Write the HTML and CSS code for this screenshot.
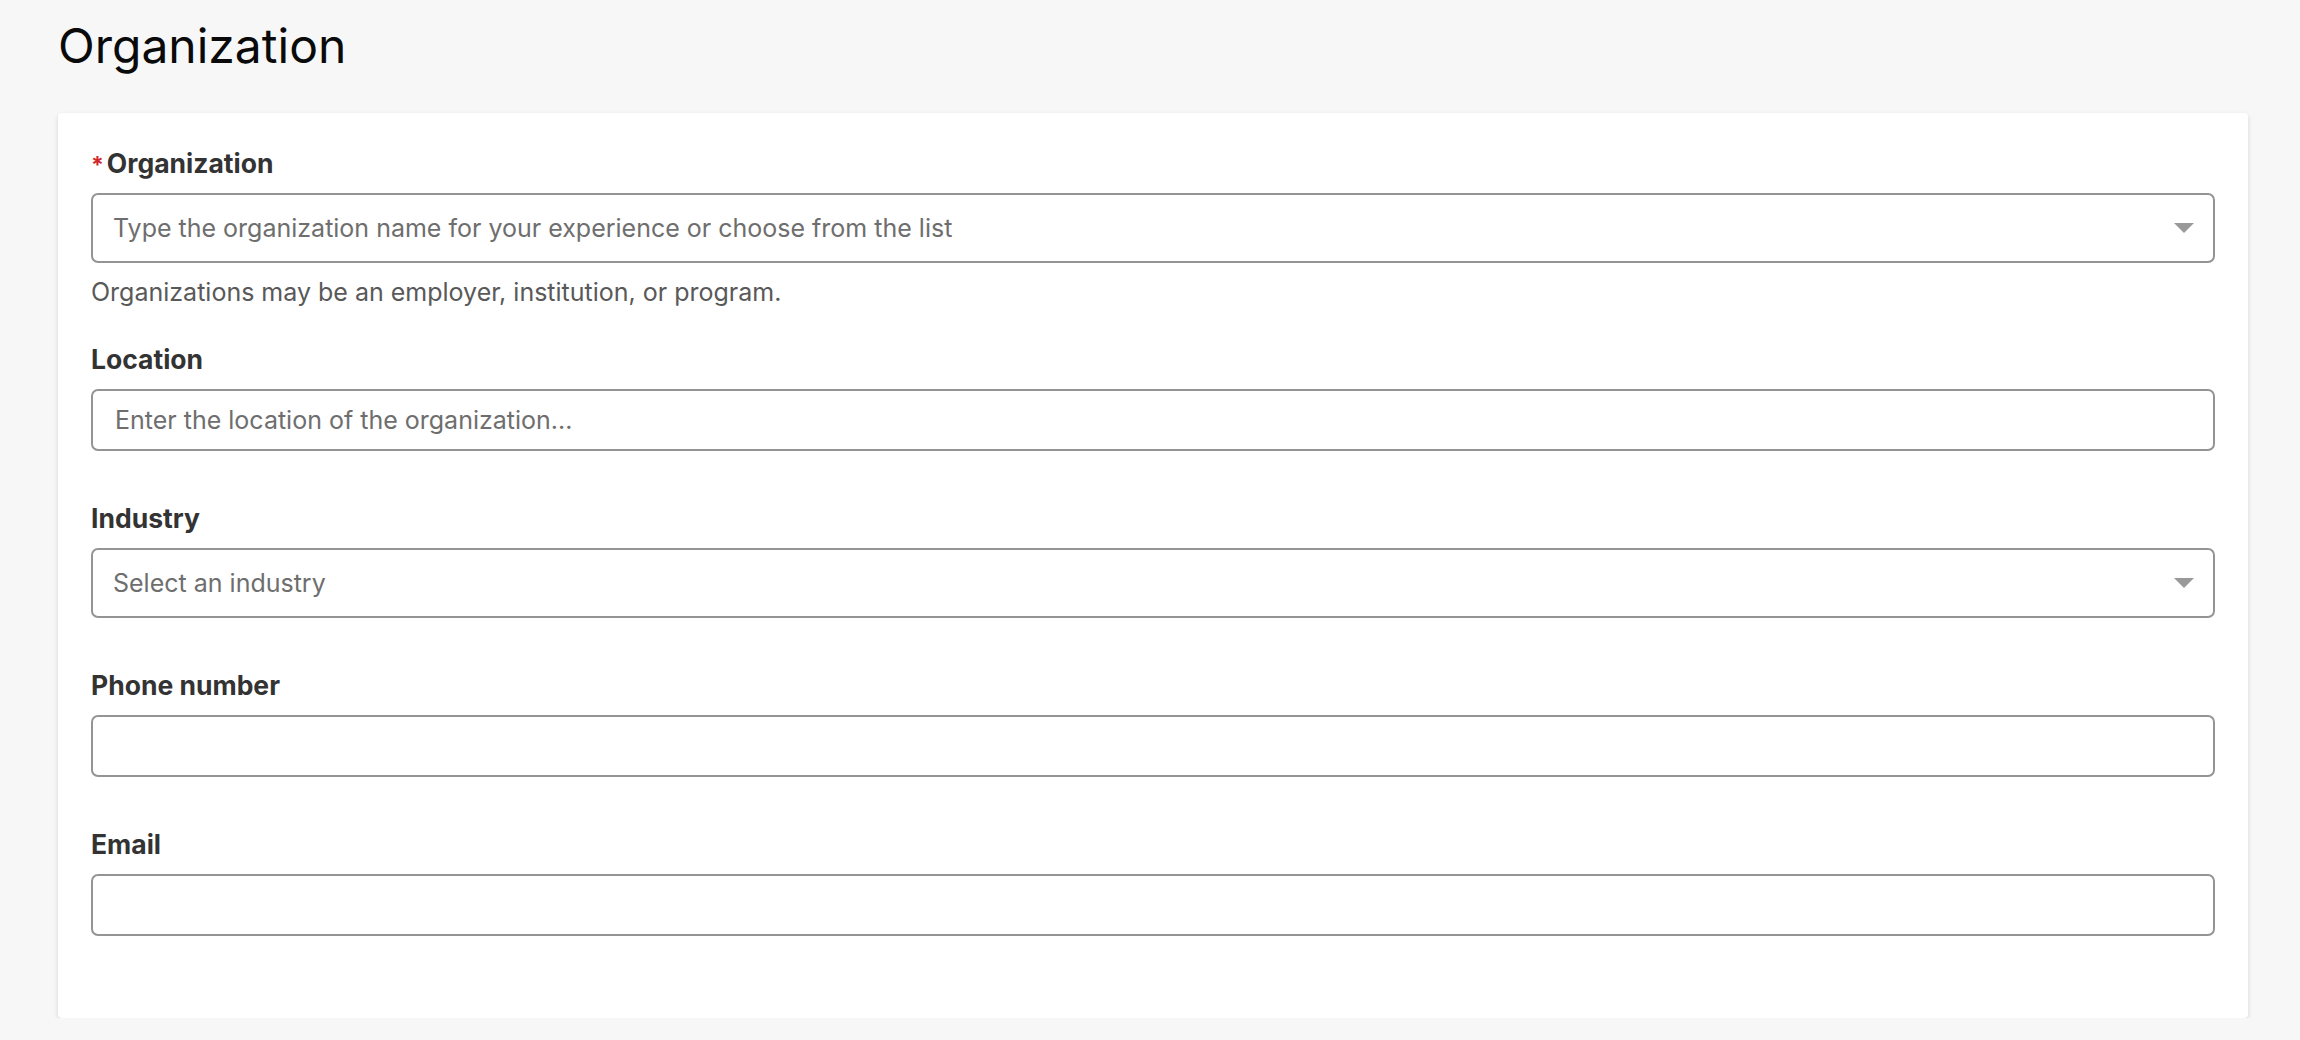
FILE: index.html
```html
<!DOCTYPE html>
<html lang="en">
<head>
  <meta charset="utf-8">
  <title>Organization</title>
  <meta name="viewport" content="width=device-width, initial-scale=1">
  <link rel="stylesheet" href="styles.css">
</head>
<body>

  <h1 class="page-title">Organization</h1>

  <!-- organization form card -->
  <form class="card">
    <div class="field first">
      <label class="label" for="org"><span class="req">*</span>Organization</label>
      <div class="box combo">
        <input id="org" type="text" placeholder="Type the organization name for your experience or choose from the list">
        <svg class="caret" width="20" height="10" viewBox="0 0 20 10"><path d="M0 0H20L10 10Z" fill="#999999"/></svg>
      </div>
      <p class="help">Organizations may be an employer, institution, or program.</p>
    </div>

    <div class="field after-help">
      <label class="label" for="loc">Location</label>
      <div class="box text">
        <input id="loc" type="text" placeholder="Enter the location of the organization...">
      </div>
    </div>

    <div class="field">
      <label class="label">Industry</label>
      <div class="box combo">
        <span class="placeholder">Select an industry</span>
        <svg class="caret" width="20" height="10" viewBox="0 0 20 10"><path d="M0 0H20L10 10Z" fill="#999999"/></svg>
      </div>
    </div>

    <div class="field">
      <label class="label" for="phone">Phone number</label>
      <div class="box text">
        <input id="phone" type="tel">
      </div>
    </div>

    <div class="field">
      <label class="label" for="email">Email</label>
      <div class="box text">
        <input id="email" type="email">
      </div>
    </div>
  </form>

</body>
</html>
```

FILE: styles.css
```css
body {
  margin: 0;
  padding: 18px 52px 0 58px;
  background: #f7f7f7;
  font-family: Inter, "Noto Sans", sans-serif;
  color: #333333;
}
.page-title {
  margin: 0 0 40px 0;
  font-size: 48px;
  font-weight: 400;
  line-height: 55px;
  color: #0a0a0a;
}

/* card */
.card {
  display: flex;
  flex-direction: column;
  background: #ffffff;
  border-radius: 4px;
  box-shadow: 0 2px 5px rgba(0, 0, 0, 0.14);
  padding: 34px 33px 31px 33px;
}
.field {
  display: flex;
  flex-direction: column;
  margin-top: 51px;
}
.field.first {
  margin-top: 0;
}
.field.after-help {
  margin-top: 35px;
}
.field:last-child {
  margin-bottom: 51px;
}
.label {
  font-size: 26.5px;
  line-height: 32px;
  font-weight: 700;
  color: #333333;
  margin-bottom: 14px;
}
.req {
  color: #d0272d;
  font-size: 23px;
  line-height: 0;
  margin-right: 3px;
}
.help {
  margin: 13px 0 0 0;
  font-size: 25px;
  line-height: 32px;
  color: #595959;
}

/* inputs */
.box {
  display: flex;
  align-items: center;
  box-sizing: border-box;
  border: 2px solid #949494;
  border-radius: 7px;
  background: #ffffff;
}
.box.combo {
  height: 70px;
  padding: 0 19px 0 20px;
}
.box.text {
  height: 62px;
  padding: 0 20px 0 22px;
}
.box input {
  flex: 1;
  min-width: 0;
  border: 0;
  outline: none;
  padding: 0;
  background: transparent;
  font-family: Inter, "Noto Sans", sans-serif;
  font-size: 25px;
  color: #333333;
}
.box input::placeholder {
  color: #6e6e6e;
  opacity: 1;
}
.placeholder {
  flex: 1;
  font-size: 25px;
  color: #6e6e6e;
}
.caret {
  flex: none;
  margin-left: 16px;
}
```
